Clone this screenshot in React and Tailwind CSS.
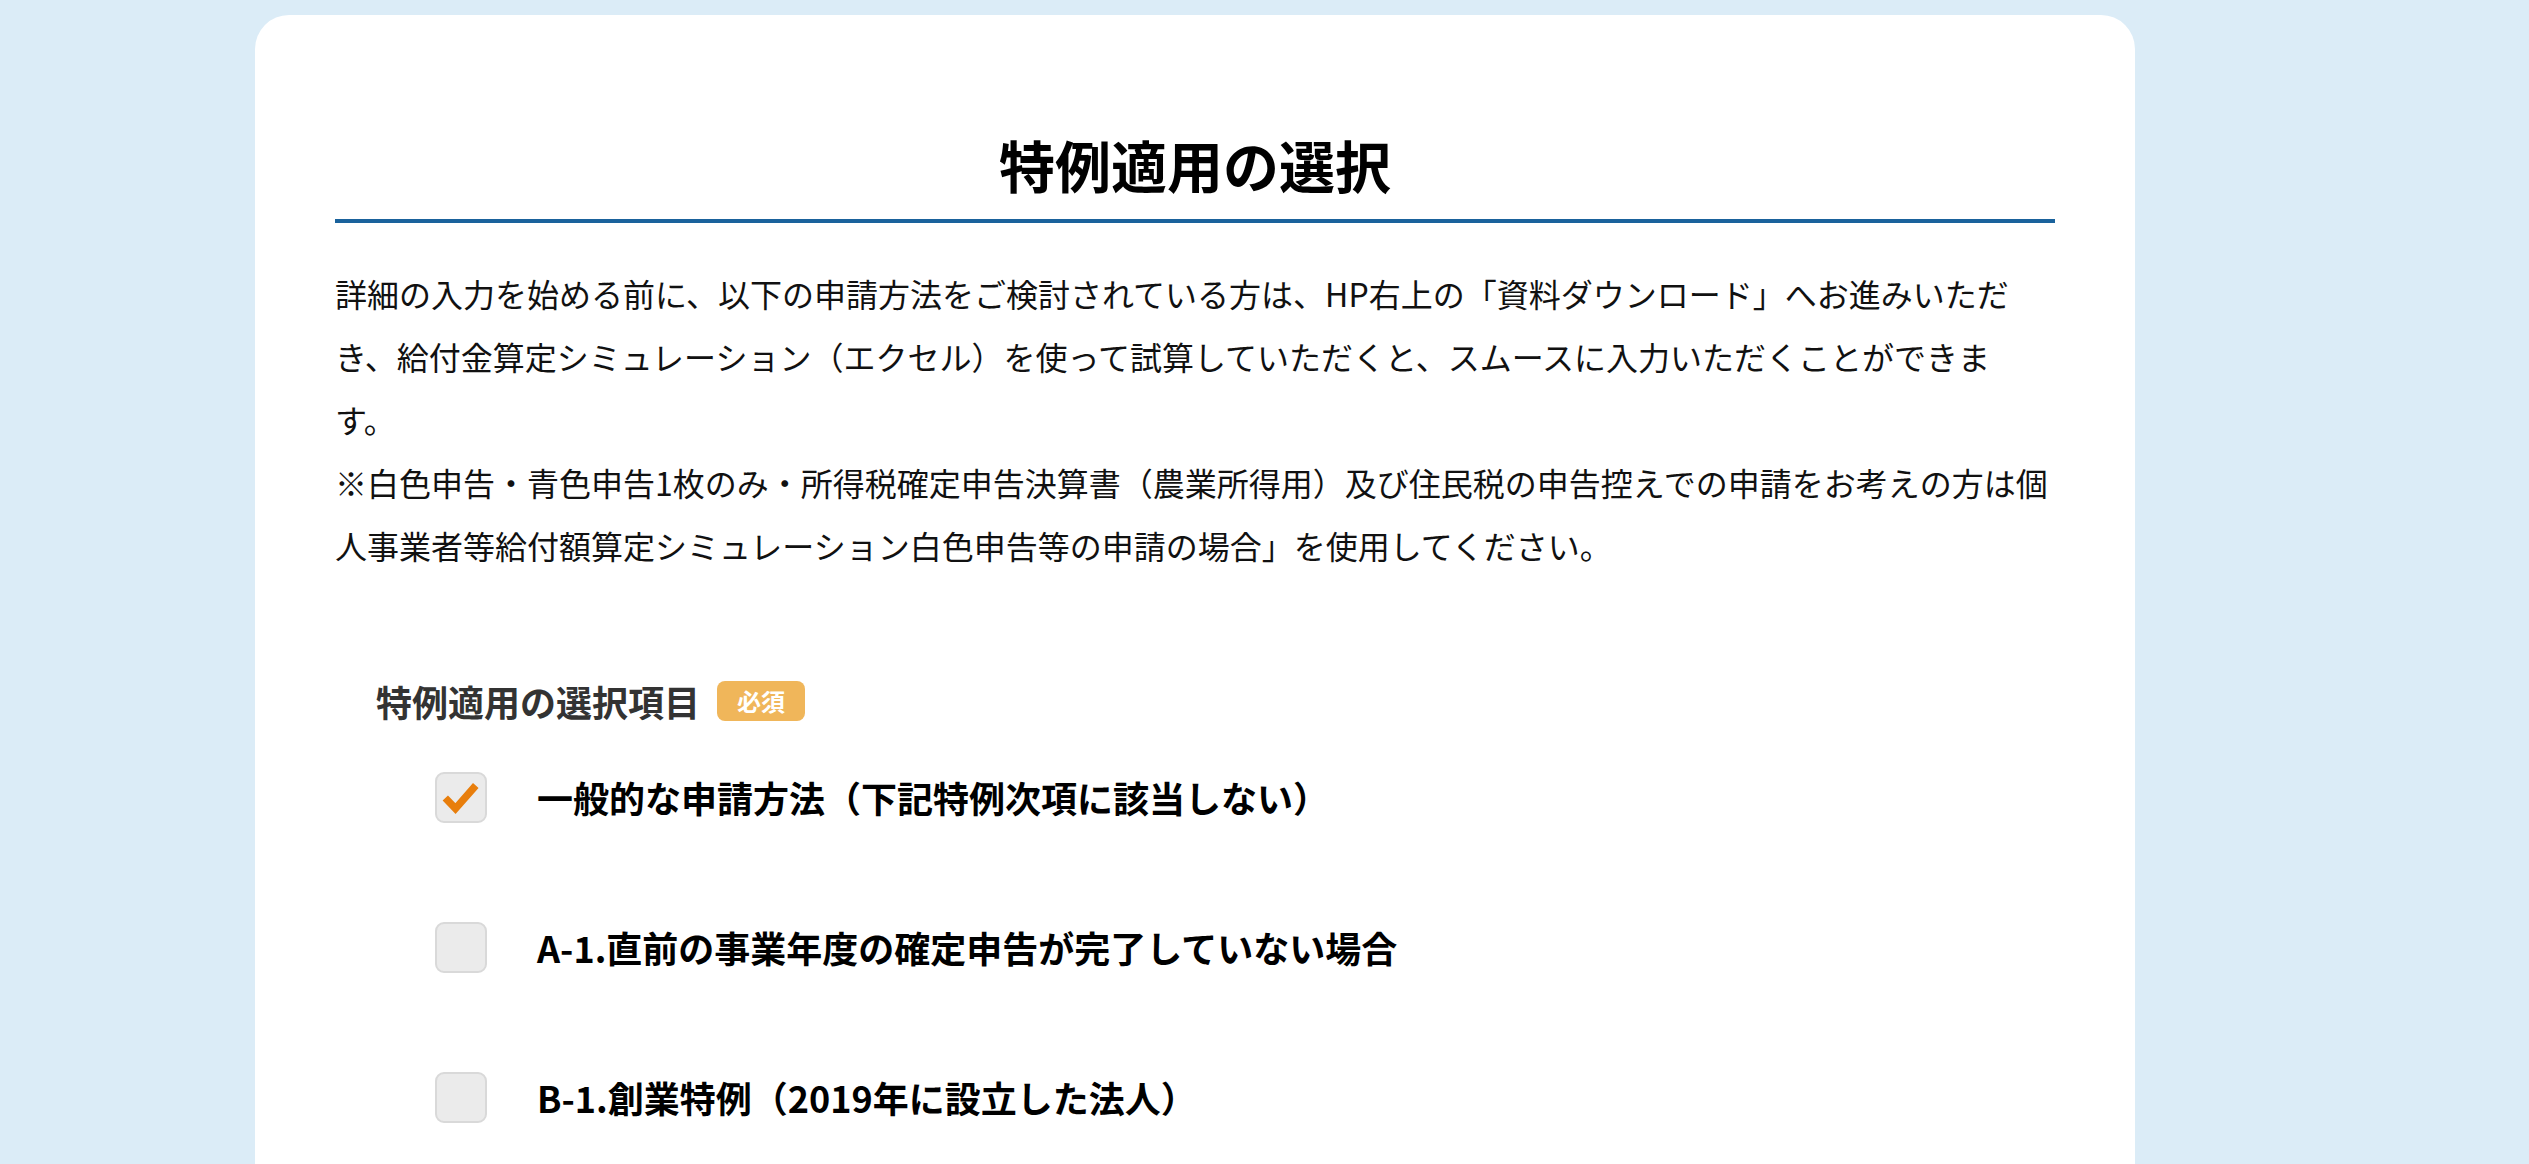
import React, { useState } from 'react';

const options = [
    { id: 'general', label: '一般的な申請方法（下記特例次項に該当しない）' },
    { id: 'a1', label: 'A-1.直前の事業年度の確定申告が完了していない場合' },
    { id: 'b1', label: 'B-1.創業特例（2019年に設立した法人）' },
];

const CheckBox = ({ checked, onClick }) => (
    <button
        type="button"
        onClick={onClick}
        className="w-[52px] h-[51px] shrink-0 rounded-[9px] border-2 border-[#d9d9d9] bg-[#ebebeb] flex items-center justify-center"
    >
        {checked && (
            <svg width="52" height="51" viewBox="0 0 52 51" fill="none">
                <path
                    d="M9 26 L20 37.5 L42 12.5"
                    stroke="#e87e0c"
                    strokeWidth="8"
                    strokeLinejoin="miter"
                />
            </svg>
        )}
    </button>
);

const App = () => {
    const [selected, setSelected] = useState('general');

    return (
        <div
            className="h-[1164px] overflow-hidden bg-[#dbecf7] pt-[15px]"
            style={{ fontFamily: '"Noto Sans CJK JP", "Noto Sans", sans-serif' }}
        >
            <div className="ml-[255px] w-[1880px] min-h-[1300px] bg-white rounded-[34px] px-[80px] pt-[121px]">
                {/* 見出し */}
                <h1 className="text-center text-[56px] leading-none font-bold text-black">
                    特例適用の選択
                </h1>
                <div className="mt-[27px] h-[4px] bg-[#1a629c]"></div>

                {/* 説明文 */}
                <div className="mt-[39px] text-[32px] leading-[63px] text-[#111]">
                    <p>
                        詳細の入力を始める前に、以下の申請方法をご検討されている方は、HP右上の「資料ダウンロード」へお進みいただき、給付金算定シミュレーション（エクセル）を使って試算していただくと、スムースに入力いただくことができま
                        <br />
                        す。
                    </p>
                    <p>
                        ※白色申告・青色申告1枚のみ・所得税確定申告決算書（農業所得用）及び住民税の申告控えでの申請をお考えの方は個人事業者等給付額算定シミュレーション白色申告等の申請の場合」を使用してください。
                    </p>
                </div>

                {/* 選択項目 */}
                <div className="mt-[104px] ml-[41px] flex items-center gap-[17px] h-[40px]">
                    <span className="text-[36px] font-bold text-[#333]">特例適用の選択項目</span>
                    <span className="w-[88px] h-[40px] rounded-[8px] bg-[#f0b65a] text-white text-[24px] font-bold flex items-center justify-center">
                        必須
                    </span>
                </div>

                <div className="mt-[49px] ml-[100px] flex flex-col gap-[96px]">
                    {options.map((opt) => (
                        <div key={opt.id} className="flex items-center gap-[50px]">
                            <CheckBox
                                checked={selected === opt.id}
                                onClick={() => setSelected(opt.id)}
                            />
                            <span className="text-[36px] font-bold text-black">{opt.label}</span>
                        </div>
                    ))}
                </div>
            </div>
        </div>
    );
};

export default App;
